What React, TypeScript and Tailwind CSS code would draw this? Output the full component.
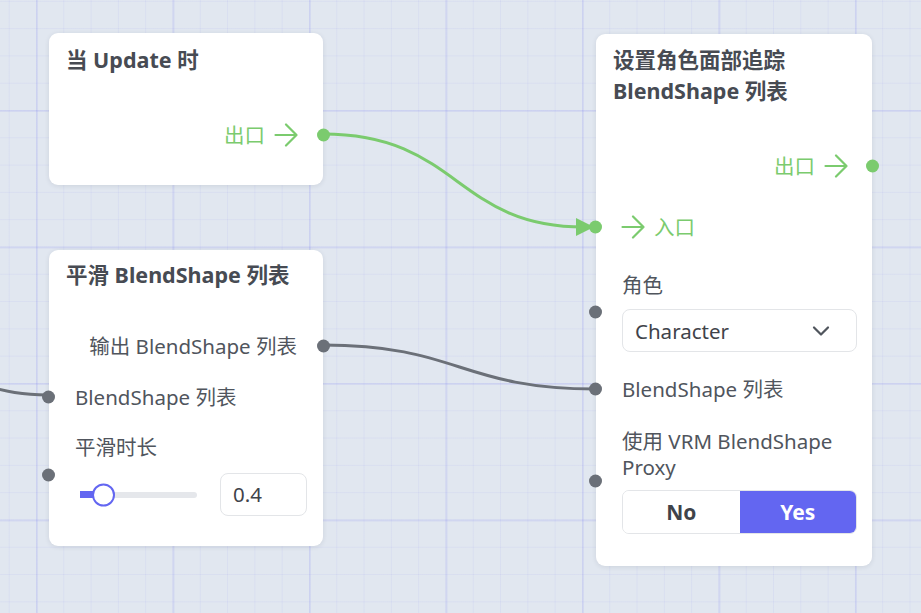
import { ChevronDown } from "lucide-react";

const GREEN = "#7bcb6e";

function Arrow() {
  return (
    <svg width="24" height="24" viewBox="0 0 24 24" fill="none" stroke={GREEN} strokeWidth="2.2" strokeLinecap="round" strokeLinejoin="round">
      <path d="M1.5 12h21M12 1.5l10.5 10.5L12 22.5" />
    </svg>
  );
}

function Handle({ side, tone }: { side: "left" | "right"; tone: "green" | "gray" }) {
  return (
    <span
      className={`absolute top-1/2 h-[13px] w-[13px] -translate-y-1/2 rounded-full ${
        side === "left" ? "left-[-7px]" : "right-[-7px]"
      } ${tone === "green" ? "bg-[#7bcb6e]" : "bg-[#6b7078]"}`}
    />
  );
}

function Node({
  left,
  top,
  width,
  height,
  children,
}: {
  left: string;
  top: string;
  width: string;
  height: string;
  children: React.ReactNode;
}) {
  return (
    <div
      className={`absolute ${left} ${top} ${width} ${height} flex flex-col rounded-[9px] bg-white shadow-[0_1px_5px_rgba(30,41,59,0.10)]`}
    >
      {children}
    </div>
  );
}

export default function App() {
  return (
    <div className="relative h-[613px] w-[921px] overflow-hidden bg-[#e1e7f0] font-['Noto_Sans','Noto_Sans_CJK_SC',sans-serif] text-[#50555d] [background-image:linear-gradient(to_right,rgba(120,125,240,0.13)_0_2px,transparent_2px),linear-gradient(to_bottom,rgba(120,125,240,0.13)_0_2px,transparent_2px),linear-gradient(to_right,rgba(120,125,240,0.08)_0_1px,transparent_1px),linear-gradient(to_bottom,rgba(120,125,240,0.08)_0_1px,transparent_1px)] [background-position:36px_110px,36px_110px,36px_110px,36px_110px] [background-size:136.5px_136.5px,136.5px_136.5px,27.3px_27.3px,27.3px_27.3px]">
      {/* edges */}
      <svg className="absolute inset-0" width="921" height="613" viewBox="0 0 921 613" fill="none">
        <path d="M323 134 C 459 134, 455 227, 584 227" stroke={GREEN} strokeWidth="3" />
        <path d="M576 218 L594 227 L576 236 Z" fill={GREEN} />
        <path d="M323 345 C 459 345, 460 389, 596 389" stroke="#6b7078" strokeWidth="3" />
        <path d="M-80 378 C -10 378, -10 395, 48 395" stroke="#6b7078" strokeWidth="3" />
      </svg>

      {/* 当 Update 时 */}
      <Node left="left-[49px]" top="top-[33px]" width="w-[274px]" height="h-[152px]">
        <h3 className="px-[17px] pt-[11px] text-[21.5px] font-bold leading-[31px] text-[#474b53]">当 Update 时</h3>
        <div className="relative mt-[46px] flex h-[28px] items-center justify-end gap-[9px] pr-[25px] text-[20.5px] text-[#7bcb6e]">
          <span>出口</span>
          <Arrow />
          <Handle side="right" tone="green" />
        </div>
      </Node>

      {/* 平滑 BlendShape 列表 */}
      <Node left="left-[49px]" top="top-[250px]" width="w-[274px]" height="h-[296px]">
        <h3 className="px-[17px] pt-[9px] text-[21.5px] font-bold leading-[31px] text-[#474b53]">平滑 BlendShape 列表</h3>
        <div className="relative mt-[42px] flex h-[28px] items-center justify-end pr-[26px] text-[20.5px]">
          <span>输出 BlendShape 列表</span>
          <Handle side="right" tone="gray" />
        </div>
        <div className="relative mt-[23px] flex h-[28px] items-center pl-[26px] text-[20.5px]">
          <span>BlendShape 列表</span>
          <Handle side="left" tone="gray" />
        </div>
        <div className="relative mt-[22px] flex flex-col pl-[26px] pr-[16px]">
          <span className="h-[28px] text-[20.5px] leading-[28px]">平滑时长</span>
          <div className="mt-[12px] flex h-[43px] items-center justify-between">
            <div className="relative ml-[5px] h-[6px] w-[117px] rounded-full bg-[#e5e7eb]">
              <div className="absolute left-0 top-[-0.5px] h-[7px] w-[23px] bg-[#6366f1]" />
              <div className="absolute left-[12px] top-1/2 h-[23px] w-[23px] -translate-y-1/2 rounded-full border-[2.5px] border-[#6366f1] bg-white" />
            </div>
            <div className="flex h-[43px] w-[87px] items-center rounded-[8px] border border-[#e3e5e8] pl-[12px] text-[20.5px] text-[#3f434a]">
              0.4
            </div>
          </div>
          <Handle side="left" tone="gray" />
        </div>
      </Node>

      {/* 设置角色面部追踪 BlendShape 列表 */}
      <Node left="left-[596px]" top="top-[34px]" width="w-[276px]" height="h-[532px]">
        <h3 className="px-[17px] pt-[10px] text-[21.5px] font-bold leading-[31px] text-[#474b53]">
          设置角色面部追踪
          <br />
          BlendShape 列表
        </h3>
        <div className="relative mt-[46px] flex h-[28px] items-center justify-end gap-[9px] pr-[24px] text-[20.5px] text-[#7bcb6e]">
          <span>出口</span>
          <Arrow />
          <Handle side="right" tone="green" />
        </div>
        <div className="relative mt-[33px] flex h-[28px] items-center gap-[9px] pl-[25px] text-[20.5px] text-[#7bcb6e]">
          <Arrow />
          <span>入口</span>
          <Handle side="left" tone="green" />
        </div>
        <div className="relative mt-[30px] flex flex-col pl-[26px] pr-[15px]">
          <span className="h-[28px] text-[20.5px] leading-[28px]">角色</span>
          <div className="mt-[10px] flex h-[43px] items-center justify-between rounded-[8px] border border-[#e3e5e8] pl-[12px] pr-[21px] text-[20.5px] text-[#3f434a]">
            <span className="pt-[2px]">Character</span>
            <ChevronDown size={28} strokeWidth={1.9} className="text-[#50555d]" />
          </div>
          <Handle side="left" tone="gray" />
        </div>
        <div className="relative mt-[23px] flex h-[28px] items-center pl-[26px] text-[20.5px]">
          <span>BlendShape 列表</span>
          <Handle side="left" tone="gray" />
        </div>
        <div className="relative mt-[25px] flex flex-col pl-[26px] pr-[15px]">
          <span className="text-[20.5px] leading-[26px]">
            使用 VRM BlendShape
            <br />
            Proxy
          </span>
          <div className="mt-[10px] flex h-[44px] overflow-hidden rounded-[7px] border border-[#e3e5e8] text-[21px] font-bold">
            <div className="flex flex-1 items-center justify-center bg-white pt-[2px] text-[#3f434a]">No</div>
            <div className="flex flex-1 items-center justify-center bg-[#6366f1] pt-[2px] text-white">Yes</div>
          </div>
          <Handle side="left" tone="gray" />
        </div>
      </Node>
    </div>
  );
}
